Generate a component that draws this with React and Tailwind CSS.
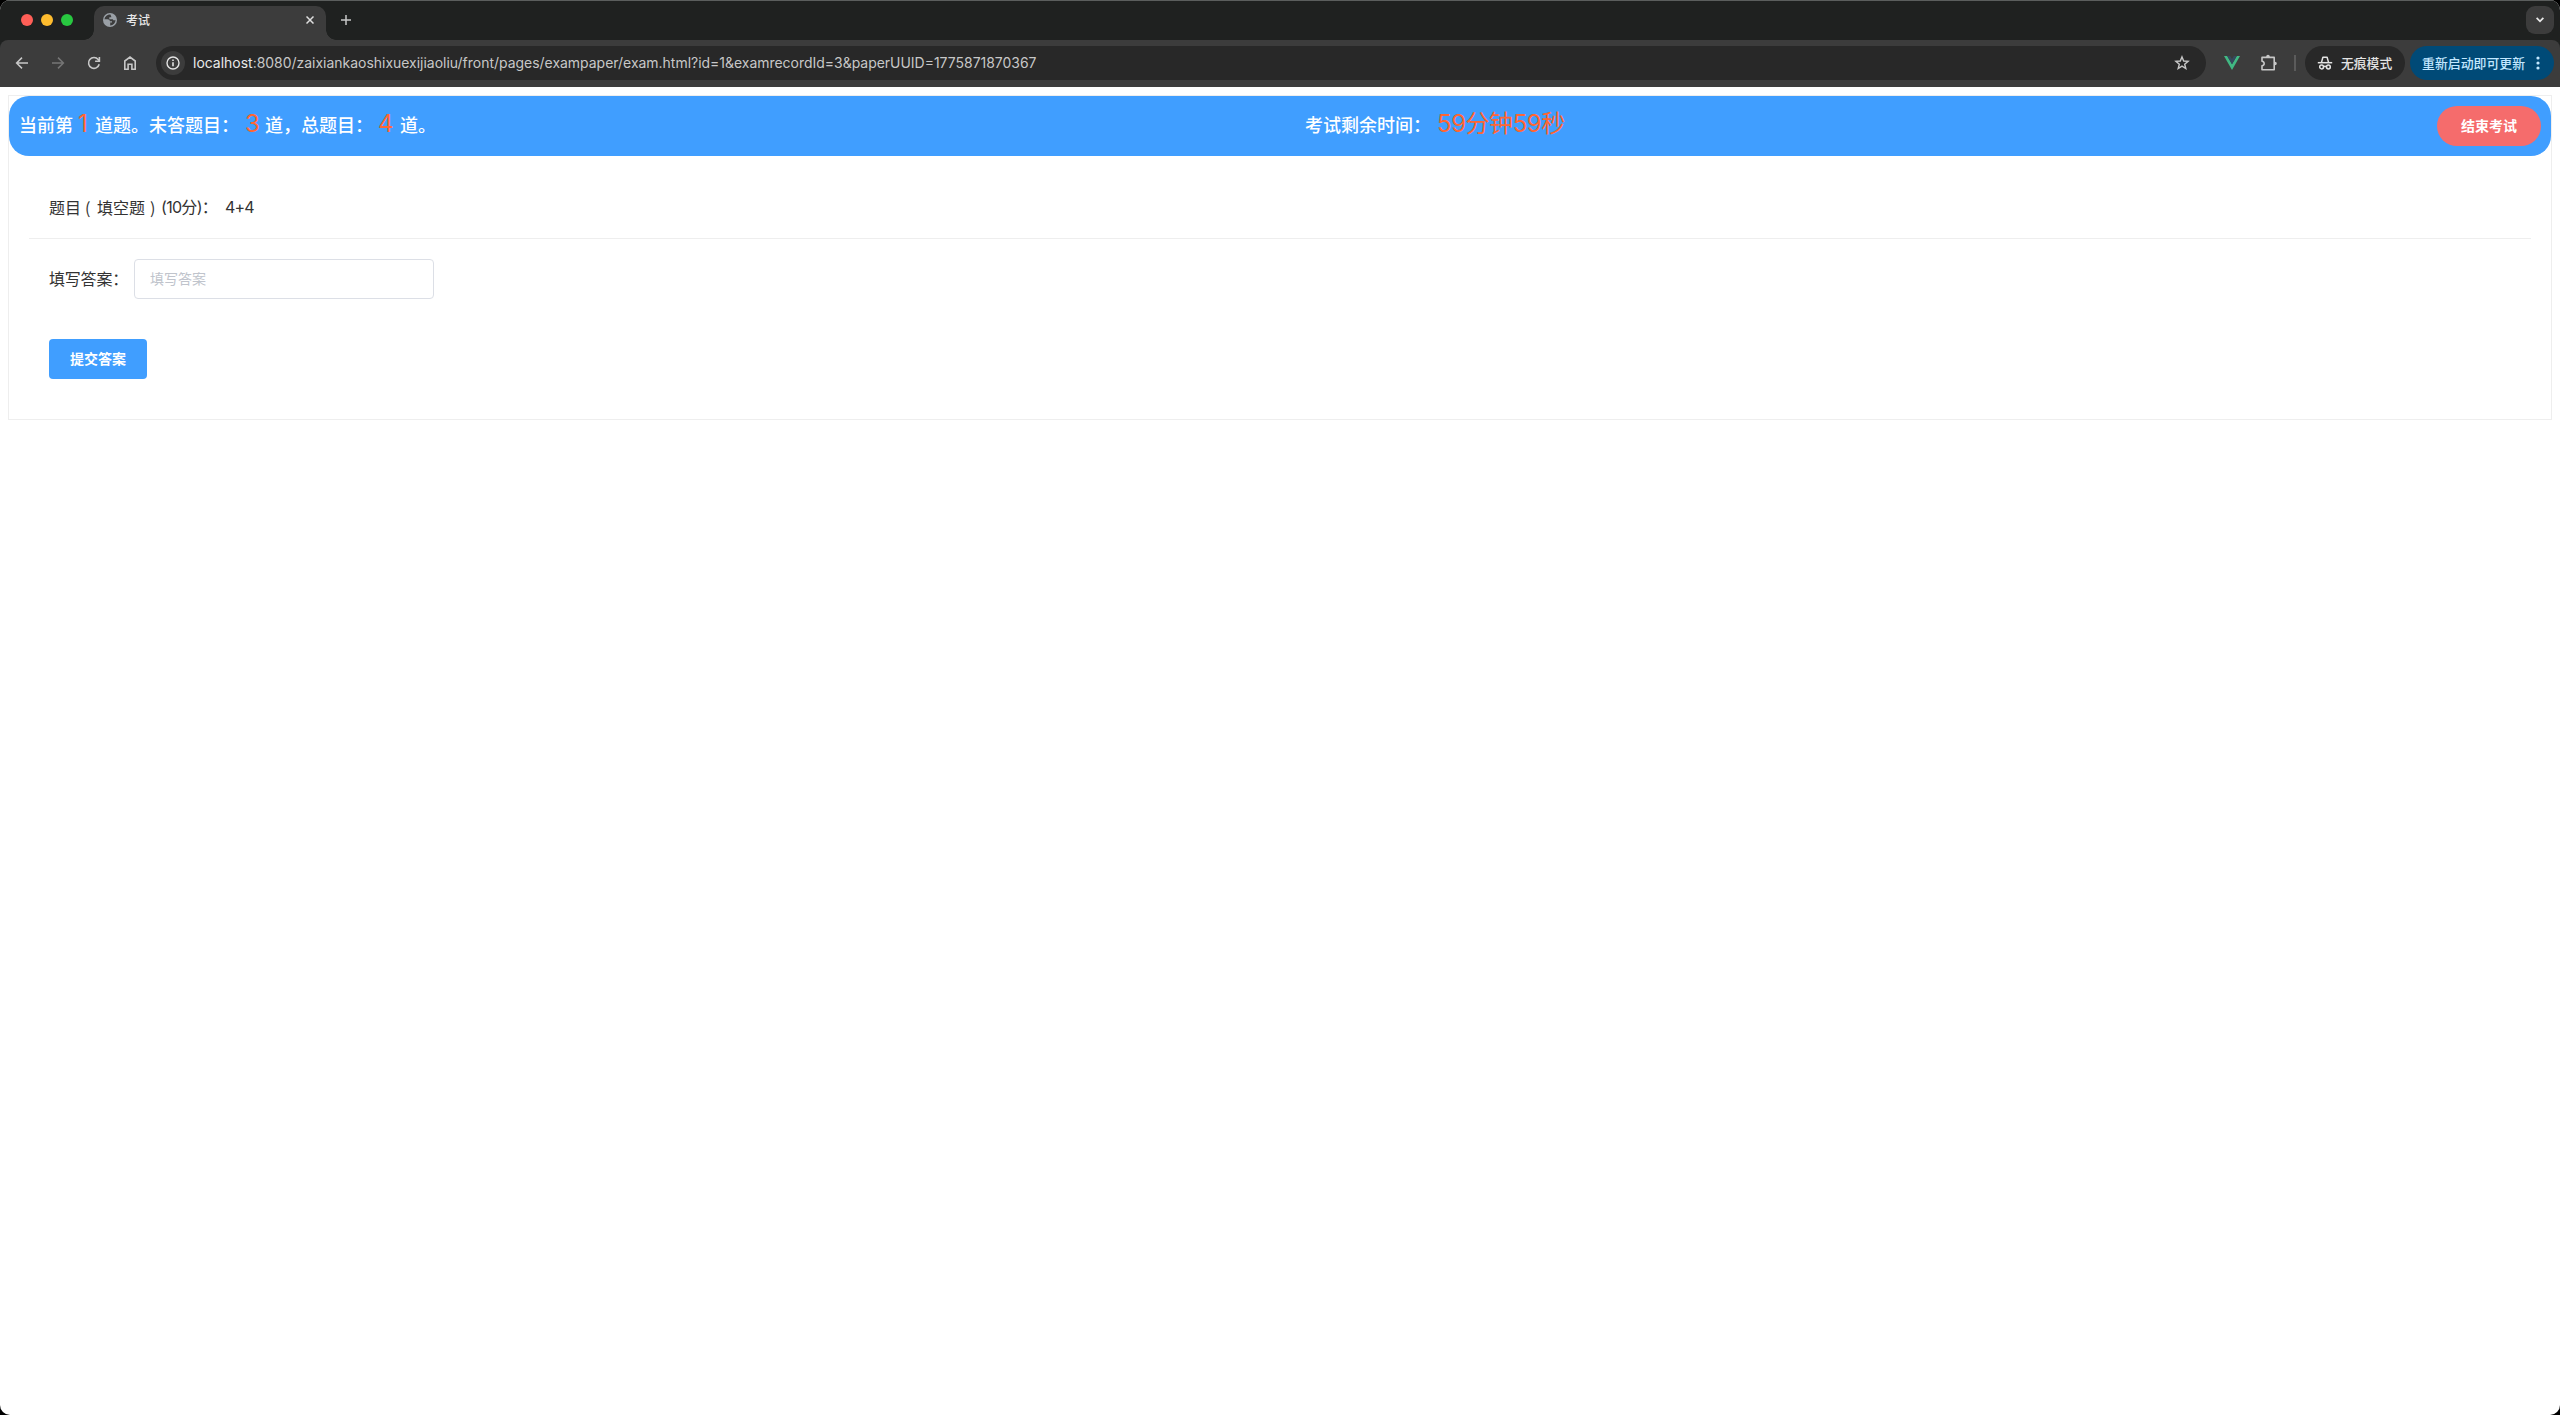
import React from "react";

/* ── ICONS ─────────────────────────────────────────────────────────────── */
const ArrowIcon = ({ className }) => (
  <svg width="14" height="14" viewBox="0 0 14 14" fill="none" stroke="currentColor" strokeWidth="1.5" className={className}>
    <path d="M13 7H1.8M7 1.6L1.6 7L7 12.4" />
  </svg>
);

const ReloadIcon = () => (
  <svg width="14" height="14" viewBox="0 0 14 14" fill="none" stroke="currentColor" strokeWidth="1.6">
    <path d="M12.2 8.3A5.4 5.4 0 1 1 11.2 3.6L12.3 5" />
    <path d="M12.4 0.9V5.2H8.1" />
  </svg>
);

const HomeIcon = () => (
  <svg width="14" height="16" viewBox="0 0 14 16" fill="none" stroke="currentColor" strokeWidth="1.6">
    <path d="M1.8 14.2V6L7 2L12.2 6V14.2H8.9V9.2H5.1V14.2Z" />
  </svg>
);

const InfoIcon = () => (
  <svg width="14" height="14" viewBox="0 0 14 14" fill="none" stroke="currentColor" strokeWidth="1.4">
    <circle cx="7" cy="7" r="6" />
    <path d="M7 6.2V10.3M7 3.6V5.1" strokeWidth="1.6" />
  </svg>
);

const GlobeIcon = () => (
  <svg width="14" height="14" viewBox="0 0 14 14">
    <circle cx="7" cy="7" r="7" fill="#9aa0a6" />
    <path
      d="M7.4 1.5A5.6 5.6 0 0 0 1.4 6.2H4.6C6 6.2 6.9 7 6.9 8.3H9V9.6H7.2V12.5A5.6 5.6 0 0 0 12.5 6.7C11.6 7.7 10.2 7.6 9.8 6.2H6.3V4.2H8.3C8.3 3 7.8 2.6 7.4 1.5Z"
      fill="#3c3c3c"
    />
  </svg>
);

const StarIcon = () => (
  <svg width="16" height="16" viewBox="0 0 16 16" fill="none" stroke="currentColor" strokeWidth="1.4">
    <path d="M8 1.9L9.7 6L14.1 6.3L10.7 9.2L11.8 13.5L8 11.1L4.2 13.5L5.3 9.2L1.9 6.3L6.3 6Z" />
  </svg>
);

const VueIcon = () => (
  <svg width="16" height="14" viewBox="0 0 16 14">
    <path d="M0 0H3.2L8 8.3L12.8 0H16L8 13.9Z" fill="#41b883" />
    <path d="M3.2 0H6.1L8 3.3L9.9 0H12.8L8 8.3Z" fill="#35495e" />
  </svg>
);

const PuzzleIcon = () => (
  <svg width="18" height="18" viewBox="0 0 18 18" fill="none" stroke="currentColor" strokeWidth="1.6">
    <path d="M2 3.4H14.2V15.8H2V11.8C4.9 11.4 4.9 7.6 2 7.2Z" strokeLinejoin="round" />
    <path d="M6.2 3V2.6A1.8 1.8 0 0 1 9.8 2.6V3ZM14.6 7.7H15A1.8 1.8 0 0 1 15 11.3H14.6Z" fill="currentColor" stroke="none" />
  </svg>
);

const IncognitoIcon = () => (
  <svg width="16" height="14" viewBox="0 0 16 14" fill="none" stroke="currentColor" strokeWidth="1.5">
    <path d="M0.8 6.7H15.2" />
    <path d="M4.4 6.6L5.9 1.2H10.1L11.6 6.6" strokeLinejoin="round" />
    <circle cx="4.6" cy="11" r="1.9" />
    <circle cx="11.4" cy="11" r="1.9" />
    <path d="M6.4 10.8Q8 9.8 9.6 10.8" />
  </svg>
);

/* ── BROWSER CHROME ────────────────────────────────────────────────────── */
const TabStrip = () => (
  <div className="flex h-10 items-end border-t border-[#5b5e5d] bg-[#1f2120]">
    <div className="flex h-[39px] w-[94px] gap-2 pl-[21px] pt-[13px]">
      <span className="size-3 rounded-full bg-[#ff5f57]" />
      <span className="size-3 rounded-full bg-[#febc2e]" />
      <span className="size-3 rounded-full bg-[#28c840]" />
    </div>
    <div className="relative flex h-[34px] w-[232px] items-center rounded-t-[10px] bg-[#3c3c3c] pb-[6px] pl-[9px] pr-3">
      <span className="absolute bottom-0 -left-[10px] size-[10px] bg-[radial-gradient(circle_at_0_0,#1f2120_9.5px,#3c3c3c_10px)]" />
      <span className="absolute bottom-0 -right-[10px] size-[10px] bg-[radial-gradient(circle_at_100%_0,#1f2120_9.5px,#3c3c3c_10px)]" />
      <GlobeIcon />
      <span className="ml-[9px] flex-1 text-xs font-medium text-[#e8e8e8]">考试</span>
      <svg width="8" height="8" viewBox="0 0 8 8" stroke="#dedede" strokeWidth="1.5">
        <path d="M0.5 0.5L7.5 7.5M7.5 0.5L0.5 7.5" />
      </svg>
    </div>
    <svg className="mb-[15px] ml-[15px]" width="10" height="10" viewBox="0 0 10 10" stroke="#c7c7c7" strokeWidth="1.5">
      <path d="M5 0V10M0 5H10" />
    </svg>
    <div className="mb-[6px] ml-auto mr-[6px] flex size-7 items-center justify-center rounded-[9px] bg-[#3c3c3c]">
      <svg width="8" height="6" viewBox="0 0 8 6" fill="none" stroke="#e8e8e8" strokeWidth="1.8">
        <path d="M0.6 0.9L4 4.3L7.4 0.9" />
      </svg>
    </div>
  </div>
);

const Toolbar = () => (
  <div className="bg-[#1f2120]">
    <div className="flex h-[47px] items-start rounded-t-lg bg-[#3c3c3c] pr-[6px] pt-[6px] text-[#c7c7c7]">
      <div className="flex h-[34px] w-[156px] items-center gap-[22px] pl-[15px]">
        <ArrowIcon />
        <ArrowIcon className="rotate-180 text-[#757575]" />
        <ReloadIcon />
        <HomeIcon />
      </div>
      <div className="flex h-[34px] w-[2050px] items-center rounded-full bg-[#282828] pl-[5px] pr-4">
        <span className="flex size-6 items-center justify-center rounded-full bg-[#3c3c3c] text-[#e3e3e3]">
          <InfoIcon />
        </span>
        <span className="ml-2 flex-1 whitespace-nowrap font-['Inter','Noto_Sans_CJK_SC',sans-serif] text-[13.96px] text-[#c7c7c7]">
          <span className="text-[#e8e8e8]">localhost</span>
          :8080/zaixiankaoshixuexijiaoliu/front/pages/exampaper/exam.html?id=1&amp;examrecordId=3&amp;paperUUID=1775871870367
        </span>
        <StarIcon />
      </div>
      <div className="flex h-[34px] w-[99px] items-center pl-[18px]">
        <VueIcon />
        <span className="ml-5">
          <PuzzleIcon />
        </span>
        <span className="ml-4 h-4 w-[2px] bg-[#5b5b5b]" />
      </div>
      <div className="flex h-[34px] w-[100px] items-center rounded-full bg-[#282828] pl-3 text-[#e3e3e3]">
        <IncognitoIcon />
        <span className="ml-2 pb-px text-[12.8px] font-medium">无痕模式</span>
      </div>
      <div className="ml-[5px] flex h-[34px] w-36 items-center rounded-full bg-[#004a77] pl-3 text-[#c2e7ff]">
        <span className="pb-px text-[12.9px] font-medium">重新启动即可更新</span>
        <svg className="ml-[11px]" width="4" height="14" viewBox="0 0 4 14" fill="currentColor">
          <circle cx="2" cy="2" r="1.6" />
          <circle cx="2" cy="7" r="1.6" />
          <circle cx="2" cy="12" r="1.6" />
        </svg>
      </div>
    </div>
  </div>
);

/* ── EXAM PAGE ─────────────────────────────────────────────────────────── */
const Count = ({ value, className }) => (
  <span className={`inline-block font-['Inter'] text-2xl leading-6 font-normal text-[#ff6633] ${className}`}>{value}</span>
);

const ExamHeader = () => (
  <div className="flex h-[60px] items-start rounded-[20px] bg-[#409eff] px-[10px] text-lg font-medium text-white">
    <div className="flex w-[1286px] items-baseline whitespace-nowrap pt-[14px]">
      <span>当前第</span>
      <Count value={1} className="w-[22px] pl-[5px]" />
      <span>道题。未答题目：</span>
      <Count value={3} className="w-[26px] pl-[6px]" />
      <span>道，总题目：</span>
      <Count value={4} className="w-[27px] pl-[5px]" />
      <span>道。</span>
    </div>
    <div className="flex flex-1 items-baseline whitespace-nowrap pt-[14px]">
      <span>考试剩余时间：</span>
      <span className="ml-[6px] font-['Inter','Noto_Sans_CJK_SC',sans-serif] text-2xl leading-6 font-normal tracking-[-0.45px] text-[#ff6633]">
        59分钟59秒
      </span>
    </div>
    <button className="mt-[10px] h-10 w-[104px] rounded-[20px] bg-[#f56c6c] pb-[3px] text-sm font-bold">结束考试</button>
  </div>
);

const App = () => {
  return (
    <div className="h-[1415px] w-[2560px] bg-black font-['Noto_Sans_CJK_SC',sans-serif]">
      <div className="h-full overflow-hidden rounded-[10px] bg-white">
        <TabStrip />
        <Toolbar />
        <div className="p-2">
          <div className="h-[325px] border border-[#eeeeee] text-[#333333]">
            <ExamHeader />
            <div className="mx-5 flex h-[83px] items-center whitespace-pre border-b border-[#eeeeee] pl-5 pt-5 text-base">
              <span>题目</span>
              <span className="w-4 pl-1">(</span>
              <span>填空题</span>
              <span className="w-4 pl-[5px]">)</span>
              <span className="w-16 font-['Inter','Noto_Sans_CJK_SC',sans-serif] tracking-[-0.7px]">(10分)：</span>
              <span className="font-['Inter'] tracking-[-0.9px]">4+4</span>
            </div>
            <div className="flex items-center pl-10 pt-5">
              <span className="w-[85px] pb-[3px] text-base tracking-[-0.2px]">填写答案：</span>
              <input
                type="text"
                placeholder="填写答案"
                className="h-10 w-[300px] rounded border border-[#dcdfe6] px-[15px] pb-[2px] text-sm placeholder:text-[#c0c4cc]"
              />
            </div>
            <button className="ml-10 mt-10 h-10 w-[98px] rounded bg-[#409eff] pb-[3px] text-sm font-bold text-white">提交答案</button>
          </div>
        </div>
      </div>
    </div>
  );
};

export default App;
